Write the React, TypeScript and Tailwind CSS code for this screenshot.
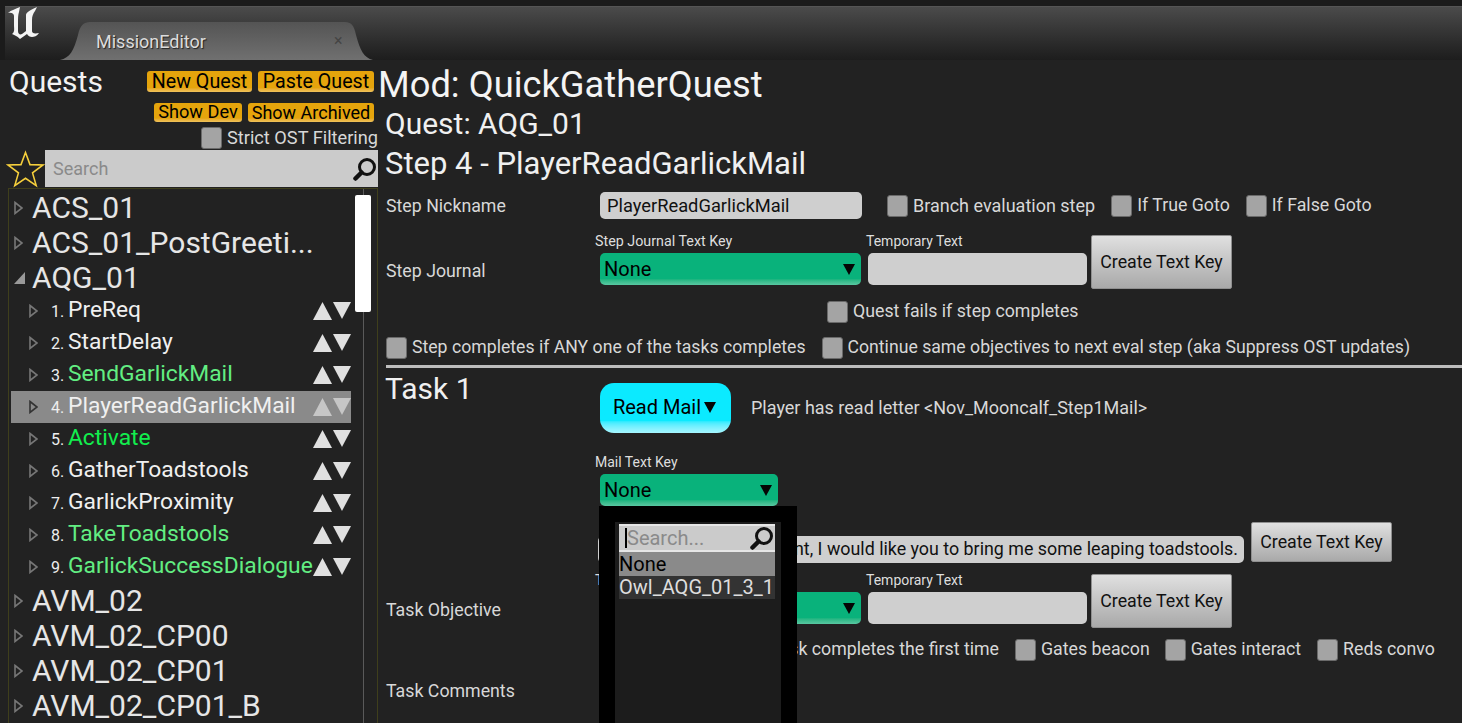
const font = { fontFamily: "Roboto, 'Liberation Sans', sans-serif" };

const Expander = ({ dark = false }: { dark?: boolean }) => (
  <svg width="9" height="14" viewBox="0 0 9 14" className="shrink-0">
    <path d="M1 1.5 L8 7 L1 12.5 Z" fill="none" stroke={dark ? "#333" : "#777"} strokeWidth="1.6" />
  </svg>
);

const MoveArrows = ({ dim = false }: { dim?: boolean }) => (
  <div className={`ml-auto flex shrink-0 items-center gap-[1px] ${dim ? "opacity-70" : ""}`}>
    <svg width="19" height="18" viewBox="0 0 19 18"><path d="M9.5 0 L19 18 L0 18 Z" fill="#e0e0e0" /></svg>
    <svg width="18" height="18" viewBox="0 0 18 18"><path d="M0 0 L18 0 L9 17 Z" fill="#e0e0e0" /></svg>
  </div>
);

const Magnifier = ({ size = 24 }: { size?: number }) => (
  <svg width={size} height={size} viewBox="0 0 24 24" className="shrink-0">
    <circle cx="14" cy="10" r="7.5" fill="none" stroke="#111" strokeWidth="3" />
    <path d="M8.5 15.5 L2.5 21.5" stroke="#111" strokeWidth="4.5" strokeLinecap="round" />
  </svg>
);

const Caret = () => (
  <svg width="12" height="11" viewBox="0 0 12 11" className="shrink-0"><path d="M0 0 L12 0 L6 11 Z" fill="#050505" /></svg>
);

const OrangeButton = ({ children, className = "" }: { children: string; className?: string }) => (
  <div className={`flex items-center justify-center rounded-[3px] bg-gradient-to-b from-[#e5a40c] from-80% to-[#f0c35a] leading-none text-black ${className}`}>
    {children}
  </div>
);

const Check = ({ label, className = "", textClass = "text-[17.75px]" }: { label: string; className?: string; textClass?: string }) => (
  <div className={`flex items-center gap-[5px] ${className}`}>
    <div className="h-[22px] w-[21px] shrink-0 rounded-[3px] border border-[#6a6a6a] bg-[#a4a4a4]" />
    <span className={`whitespace-nowrap leading-none text-[#d8d8d8] ${textClass}`}>{label}</span>
  </div>
);

const Dropdown = ({ className = "" }: { className?: string }) => (
  <div className={`flex h-[32px] items-center justify-between rounded-[5px] bg-gradient-to-b from-[#09b27b] from-80% to-[#58c8a2] pl-[4px] pr-[6px] text-[20px] leading-none text-black ${className}`}>
    None
    <Caret />
  </div>
);

const CreateKey = ({ className = "" }: { className?: string }) => (
  <div className={`flex w-[141px] items-center justify-center rounded-[2px] border border-[#8f8f8f] bg-gradient-to-b from-[#e0e0e0] to-[#a9a9a9] pt-[2px] text-[17.75px] leading-none text-[#111] ${className}`}>
    Create Text Key
  </div>
);

const TextKeyRow = ({ label, keyLabel }: { label: string; keyLabel: string }) => (
  <div className="flex h-[54px] items-start">
    <div className="w-[209px] shrink-0 pt-[26px] text-[17.75px] leading-[20px] text-[#d8d8d8]">{label}</div>
    <div className="w-[271px] shrink-0">
      <div className="h-[18px] whitespace-nowrap text-[14.3px] leading-[12px] text-[#dedede]">{keyLabel}</div>
      <Dropdown className="ml-[5px] w-[261px]" />
    </div>
    <div className="w-[225px] shrink-0">
      <div className="h-[18px] text-[14px] leading-[12px] text-[#dedede]">Temporary Text</div>
      <div className="ml-[2px] h-[32px] w-[219px] rounded-[5px] bg-[#cfcfcf]" />
    </div>
    <CreateKey className="h-[54px]" />
  </div>
);

const QuestRow = ({ name, open = false }: { name: string; open?: boolean }) => (
  <div className="flex h-[35px] items-center pl-[5px]">
    <div className="flex w-[18px] shrink-0 items-center">
      {open ? (
        <svg width="11" height="12" viewBox="0 0 11 12"><path d="M11 0 L11 12 L0 12 Z" fill="#999" /></svg>
      ) : (
        <Expander />
      )}
    </div>
    <span className="whitespace-nowrap text-[30px] leading-none text-[#e6e6e6]">{name}</span>
  </div>
);

const steps = [
  { name: "PreReq", color: "text-[#f0f0f0]" },
  { name: "StartDelay", color: "text-[#f0f0f0]" },
  { name: "SendGarlickMail", color: "text-[#62ee82]" },
  { name: "PlayerReadGarlickMail", color: "text-[#f0f0f0]", selected: true },
  { name: "Activate", color: "text-[#12ee4e]" },
  { name: "GatherToadstools", color: "text-[#f0f0f0]" },
  { name: "GarlickProximity", color: "text-[#f0f0f0]" },
  { name: "TakeToadstools", color: "text-[#62ee82]" },
  { name: "GarlickSuccessDialogue", color: "text-[#62ee82]" },
];

const Sidebar = () => (
  <div className="flex w-[378px] shrink-0 flex-col pl-[5px]">
    <div className="flex h-[128px] flex-col">
      <div className="flex h-[32px] items-end">
        <span className="pl-[4px] text-[30px] leading-[20px] text-[#f2f2f2]">Quests</span>
        <OrangeButton className="ml-auto h-[21px] w-[105px] text-[19.7px]">New Quest</OrangeButton>
        <OrangeButton className="ml-[6px] mr-[4px] h-[21px] w-[116px] text-[19.7px]">Paste Quest</OrangeButton>
      </div>
      <div className="mt-[11px] flex justify-end gap-[6px] pr-[4px]">
        <OrangeButton className="h-[19px] w-[88px] text-[18.2px]">Show Dev</OrangeButton>
        <OrangeButton className="h-[19px] w-[126px] text-[18px]">Show Archived</OrangeButton>
      </div>
      <Check label="Strict OST Filtering" textClass="text-[18.2px]" className="mt-[5px] justify-end" />
      <div className="mt-[1px] flex h-[37px] items-center">
        <svg width="39" height="38" viewBox="0 0 40 38" className="ml-[1px] shrink-0">
          <path d="M20 2 L24.6 14.5 L38 14.8 L27.2 23 L31 36 L20 28.5 L9 36 L12.8 23 L2 14.8 L15.4 14.5 Z" fill="none" stroke="#f5cf3c" strokeWidth="1.6" />
        </svg>
        <div className="flex h-[37px] flex-1 items-center justify-between bg-[#cbcbcb] pl-[8px] pr-[1px] text-[18px] text-[#8a8a8a]">
          Search
          <Magnifier />
        </div>
      </div>
    </div>
    <div className="relative ml-[3px] h-[535px] overflow-hidden border-x border-t border-[#3f3f1c] pt-[1px]">
      <div className="absolute left-[354px] top-0 h-full w-[1px] bg-[#5a5a5a]" />
      <div className="absolute left-[346px] top-[6px] h-[117px] w-[16px] rounded-[2px] bg-white" />
      <QuestRow name="ACS_01" />
      <QuestRow name="ACS_01_PostGreeti..." />
      <QuestRow name="AQG_01" open />
      <div>
        {steps.map((s, i) => (
          <div key={s.name} className={`ml-[2px] flex h-[32px] w-[340px] items-center pl-[18px] ${s.selected ? "bg-[#8a8a8a]" : ""}`}>
            <Expander dark={s.selected} />
            <span className="ml-[13px] w-[17px] shrink-0 pt-[2px] text-[16px] leading-none text-[#eee]">{i + 1}.</span>
            <span className={`whitespace-nowrap pb-[2px] text-[22.8px] leading-none ${s.color}`}>{s.name}</span>
            <MoveArrows dim={s.selected} />
          </div>
        ))}
      </div>
      <QuestRow name="AVM_02" />
      <QuestRow name="AVM_02_CP00" />
      <QuestRow name="AVM_02_CP01" />
      <QuestRow name="AVM_02_CP01_B" />
    </div>
  </div>
);

const Main = () => (
  <div className="flex flex-1 flex-col overflow-hidden pl-[8px]">
    <div className="-ml-[8px] flex h-[46px] items-center pt-[4px] text-[36.3px] leading-none text-[#f4f4f4]">Mod: QuickGatherQuest</div>
    <div className="-ml-[1px] flex h-[36px] items-center text-[30px] leading-none text-[#f0f0f0]">Quest: AQG_01</div>
    <div className="-ml-[1px] flex h-[42px] items-center text-[31px] leading-none text-[#f0f0f0]">Step 4 - PlayerReadGarlickMail</div>
    <div className="mt-[8px] flex h-[28px] items-center">
      <div className="w-[214px] shrink-0 text-[17.75px] text-[#d8d8d8]">Step Nickname</div>
      <div className="mb-[2px] flex h-[27px] w-[262px] shrink-0 items-center rounded-[5px] bg-[#cfcfcf] pl-[7px] pt-[2px] text-[18.3px] text-[#111]">PlayerReadGarlickMail</div>
      <Check label="Branch evaluation step" className="ml-[25px]" textClass="text-[18px]" />
      <Check label="If True Goto" className="ml-[16px]" />
      <Check label="If False Goto" className="ml-[16px]" />
    </div>
    <div className="mt-[15px]"><TextKeyRow label="Step Journal" keyLabel="Step Journal Text Key" /></div>
    <Check label="Quest fails if step completes" className="ml-[441px] mt-[12px]" />
    <div className="mt-[14px] flex">
      <Check label="Step completes if ANY one of the tasks completes" textClass="text-[17.66px]" />
      <Check label="Continue same objectives to next eval step (aka Suppress OST updates)" textClass="text-[17.66px]" className="ml-[16px]" />
    </div>
    <div className="mt-[6px] h-[3px] bg-[#bdbdbd]" />
    <div className="flex h-[68px] pt-[15px]">
      <div className="-ml-[1px] w-[215px] shrink-0 pt-[1px] text-[30px] leading-[10px] text-[#f0f0f0]">Task 1</div>
      <div className="flex h-[50px] w-[131px] shrink-0 items-center justify-center gap-[3px] rounded-[14px] bg-gradient-to-b from-[#0beaff] from-75% to-[#a6f6ff] pb-[2px] pr-[2px] text-[20px] text-black">
        Read Mail
        <Caret />
      </div>
      <div className="ml-[20px] flex h-[50px] items-center pb-[2px] text-[18px] text-[#d8d8d8]">Player has read letter &lt;Nov_Mooncalf_Step1Mail&gt;</div>
    </div>
    <div className="ml-[209px] mt-[19px] h-[19px] text-[14px] leading-[14px] text-[#dedede]">Mail Text Key</div>
    <Dropdown className="ml-[214px] w-[178px]" />
    <div className="mt-[16px] flex h-[40px] items-start">
      <div className="ml-[212px] mt-[14px] flex h-[27px] w-[646px] items-center justify-end overflow-hidden rounded-[5px] bg-[#cfcfcf] pr-[6px] text-[17.85px] whitespace-nowrap text-[#111]">
        nt, I would like you to bring me some leaping toadstools.
      </div>
      <CreateKey className="ml-[7px] h-[40px]" />
    </div>
    <div className="mt-[12px]"><TextKeyRow label="Task Objective" keyLabel="Task Objective Text Key" /></div>
    <div className="mt-[11px] flex h-[22px] items-center">
      <div className="w-[613px] shrink-0 text-right text-[17.75px] leading-none text-[#d8d8d8]">Task completes the first time</div>
      <Check label="Gates beacon" className="ml-[16px]" />
      <Check label="Gates interact" className="ml-[15px]" />
      <Check label="Reds convo" className="ml-[16px]" />
    </div>
    <div className="mt-[20px] text-[17.75px] leading-[20px] text-[#d8d8d8]">Task Comments</div>
  </div>
);

export default function App() {
  return (
    <div style={font} className="relative h-[723px] w-[1462px] overflow-hidden bg-[#222222]">
      <div className="h-[6px] bg-[#1b1b1b]" />
      <div className="flex h-[54px] bg-[#1b1b1b] pl-[5px]">
        <div className="relative flex h-full flex-1 items-end border-t border-[#555] bg-gradient-to-b from-[#4b4b4b] via-[#2a2a2a] via-70% to-[#1d1d1d] pl-[55px]">
          <svg width="40" height="36" viewBox="0 0 40 36" className="absolute -left-[1px] -top-[1px]">
            <path d="M4 7 C7 4 12 3 16 1 L15 6 C14 9 14 12 14 16 L14 25 C14 28 16 29 18 28 L22 25 L22 9 C22 6 27 4 33 1 L31 5 C29 8 28 10 28 14 L28 25 C28 27 30 28 35 27 C33 30 30 31 28 31 C26 31 24 30 23 28 L16 33 C13 30 10 29 8 28 C11 26 10 23 10 19 L10 10 C10 8 8 6 4 7 Z" fill="#f4f4f4" />
          </svg>
          <div className="relative flex h-[38px] w-[313px] items-center pl-[36px]">
            <svg width="313" height="38" viewBox="0 0 313 38" className="absolute left-0 top-0">
              <defs>
                <linearGradient id="tabfill" x1="0" y1="0" x2="0" y2="1">
                  <stop offset="0" stopColor="#545454" />
                  <stop offset="1" stopColor="#707070" />
                </linearGradient>
              </defs>
              <path d="M0 38 C10 36 14 28 18 13 C20 3 24 0 30 0 L285 0 C291 0 294 3 296 13 C300 28 304 36 313 38 Z" fill="url(#tabfill)" />
            </svg>
            <span className="relative text-[18px] text-[#dcdcdc] [text-shadow:1px_1px_1px_#222]">MissionEditor</span>
            <span className="absolute left-[274px] text-[16px] leading-none text-[#444]">×</span>
          </div>
        </div>
      </div>
      <div className="flex h-[663px]">
        <Sidebar />
        <Main />
      </div>
      <div className="absolute left-[599px] top-[506px] h-[217px] w-[198px] bg-black pl-[16px] pt-[16px]">
        <div className="h-full w-[166px] bg-[#1c1c1c] pl-[4px] pr-[6px] pt-[2px]">
          <div className="flex h-[28px] items-center justify-between border-y-2 border-[#e6e6e6] bg-[#cbcbcb] pr-[1px] text-[20px] leading-none text-[#8a8a8a]">
            <span className="ml-[6px] border-l-2 border-black">Search...</span>
            <Magnifier />
          </div>
          <div className="h-[24px] bg-[#8a8a8a] text-[20px] leading-[24px] text-black">None</div>
          <div className="h-[23px] overflow-hidden bg-[#333333] text-[20px] leading-[23px] whitespace-nowrap text-[#dedede]">Owl_AQG_01_3_1</div>
        </div>
      </div>
    </div>
  );
}
